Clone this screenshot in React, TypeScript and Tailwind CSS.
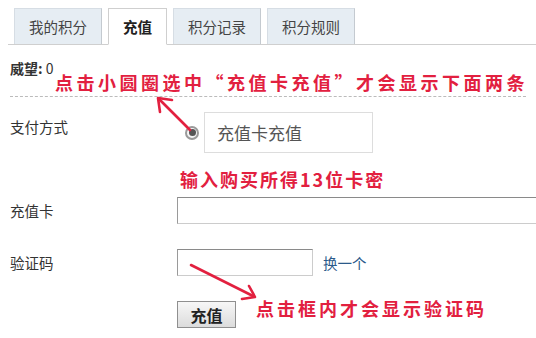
const tabs = ["我的积分", "充值", "积分记录", "积分规则"];

const Arrows = () => (
  <svg
    className="absolute inset-0 pointer-events-none"
    width="536"
    height="338"
    viewBox="0 0 536 338"
  >
    <g
      stroke="#e2203f"
      strokeWidth="2.6"
      fill="none"
      strokeLinecap="round"
      strokeLinejoin="round"
    >
      <line x1="190" y1="130" x2="159" y2="99" />
      <polyline points="172,100 158,98 160,112" />
      <line x1="191" y1="265" x2="253" y2="296" />
      <polyline points="249,286 255,297 242,299" />
    </g>
  </svg>
);

const Note = ({
  children,
  className,
}: {
  children: string;
  className: string;
}) => (
  <div
    className={`absolute text-[18px] leading-[22px] font-bold text-[#e2203f] whitespace-nowrap ${className}`}
  >
    {children}
  </div>
);

export default function App() {
  return (
    <div className="relative w-[536px] h-[338px] overflow-hidden bg-white text-[#333] font-['Noto_Sans_CJK_SC',sans-serif]">
      <div className="pt-[8px]">
        <div className="ml-[8px] pl-[6px] flex gap-[6px] border-b border-[#cfcfcf]">
          {tabs.map((t, i) =>
            i === 1 ? (
              <div
                key={t}
                className="h-[37px] -mb-px flex items-center px-[14px] bg-white border border-[#cfcfcf] border-b-white text-[14.5px] font-bold text-[#222]"
              >
                {t}
              </div>
            ) : (
              <div
                key={t}
                className="h-[36px] flex items-center px-[14px] bg-[#e6edf3] border border-[#d6dde4] border-r-[#c4cad0] border-b-0 text-[14.5px] text-[#444]"
              >
                {t}
              </div>
            )
          )}
        </div>
      </div>

      <div className="px-[10px]">
        <div className="mt-[13px] leading-[20px] text-[14px]">
          <span className="font-bold">威望:</span> 0
        </div>
        <div className="mt-[18px] border-t border-dashed border-[#bbbbbb]" />

        <div className="mt-[15px] flex">
          <div className="w-[167px] shrink-0 pt-[5px] leading-[20px] text-[14.5px]">
            支付方式
          </div>
          <div className="flex items-center ml-[8px] gap-[5px]">
            <div className="w-[14px] h-[14px] rounded-full border-2 border-[#9a9a9a] bg-[#f4f4f4] flex items-center justify-center">
              <div className="w-[7px] h-[7px] rounded-full bg-[#555555]" />
            </div>
            <div className="w-[169px] h-[41px] flex items-center pl-[12px] border border-[#dddddd] text-[17px] text-[#555]">
              充值卡充值
            </div>
          </div>
        </div>

        <div className="mt-[44px] flex items-center">
          <div className="w-[167px] shrink-0 leading-[20px] text-[14.5px]">充值卡</div>
          <div className="w-[380px] h-[27px] shrink-0 border border-[#cccccc] border-t-[#8a8a8a] border-l-[#9a9a9a] bg-white" />
        </div>

        <div className="mt-[25px] flex items-center">
          <div className="w-[167px] shrink-0 leading-[20px] text-[14.5px]">验证码</div>
          <div className="w-[136px] h-[27px] shrink-0 border border-[#cccccc] border-t-[#8a8a8a] border-l-[#9a9a9a] bg-white" />
          <span className="ml-[10px] text-[14.5px] text-[#2b5a8a]">换一个</span>
        </div>

        <div className="mt-[25px] flex">
          <button className="ml-[167px] w-[59px] h-[27px] border border-[#8f8f8f] bg-gradient-to-b from-[#f7f7f7] to-[#dcdcdc] text-[16px] font-bold text-[#222] flex items-center justify-center">
            充值
          </button>
        </div>
      </div>

      <Note className="left-[55px] top-[71px] tracking-[3.5px]">
        点击小圆圈选中“充值卡充值”才会显示下面两条
      </Note>
      <Note className="left-[180px] top-[168px] tracking-[2px]">
        输入购买所得13位卡密
      </Note>
      <Note className="left-[256px] top-[297px] tracking-[3px]">
        点击框内才会显示验证码
      </Note>
      <Arrows />
    </div>
  );
}
